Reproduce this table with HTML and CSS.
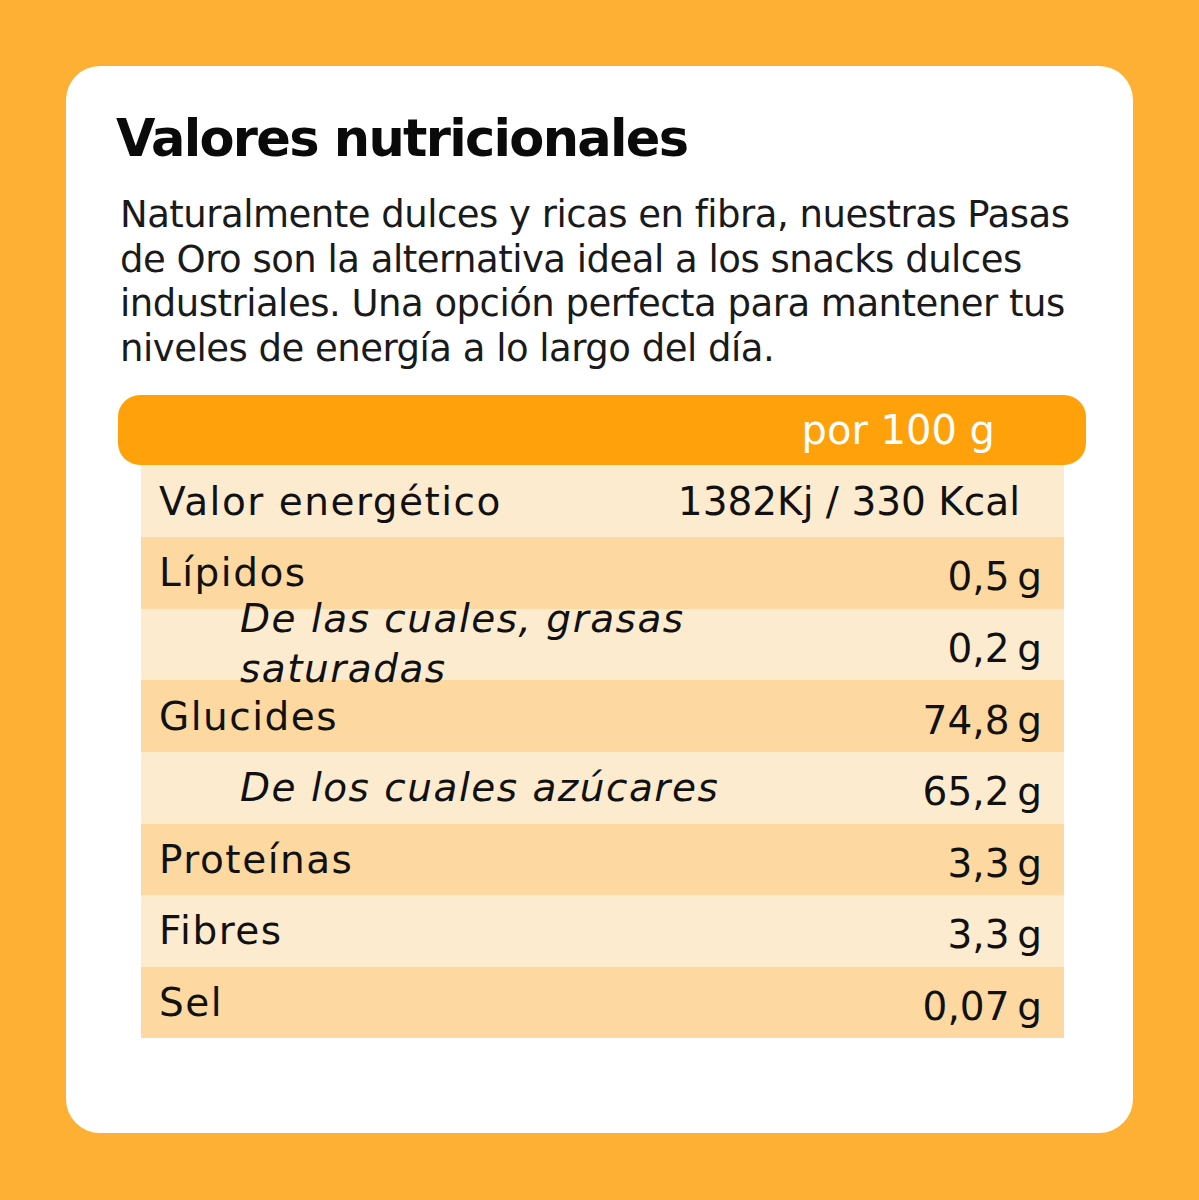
FILE: index.html
```html
<!DOCTYPE html>
<html lang="es">
<head>
<meta charset="utf-8">
<link rel="stylesheet" href="styles.css">
</head>
<body>
<main class="card">
  <h1 class="title">Valores nutricionales</h1>
  <p class="intro">Naturalmente dulces y ricas en fibra, nuestras Pasas<br>de Oro son la alternativa ideal a los snacks dulces<br>industriales. Una opción perfecta para mantener tus<br>niveles de energía a lo largo del día.</p>
  <div class="table">
    <div class="head"><span class="per">por 100 g</span></div>
    <div class="rows">
      <div class="row light"><span class="label">Valor energético</span><span class="value first">1382Kj / 330 Kcal</span></div>
      <div class="row dark"><span class="label">Lípidos</span><span class="value">0,5&#8201;g</span></div>
      <div class="row light"><span class="label sub wrap">De las cuales, grasas<br>saturadas</span><span class="value">0,2&#8201;g</span></div>
      <div class="row dark"><span class="label">Glucides</span><span class="value">74,8&#8201;g</span></div>
      <div class="row light"><span class="label sub">De los cuales azúcares</span><span class="value">65,2&#8201;g</span></div>
      <div class="row dark"><span class="label">Proteínas</span><span class="value">3,3&#8201;g</span></div>
      <div class="row light"><span class="label">Fibres</span><span class="value">3,3&#8201;g</span></div>
      <div class="row dark"><span class="label">Sel</span><span class="value">0,07&#8201;g</span></div>
    </div>
  </div>
</main>
</body>
</html>
```
FILE: styles.css
```css
html, body {
  margin: 0;
  padding: 0;
}
body {
  background: #FDB034;
  width: 1199px;
  height: 1200px;
  padding: 66px;
  box-sizing: border-box;
  font-family: "DejaVu Sans", "Liberation Sans", sans-serif;
  color: #111;
}
.card {
  background: #fff;
  width: 1067px;
  height: 1067px;
  border-radius: 34px;
  box-sizing: border-box;
  padding: 44px 0 0 50px;
}
.title {
  margin: 0;
  font-size: 51px;
  font-weight: bold;
  line-height: 58px;
  color: #0a0a0a;
  letter-spacing: -1.7px;
}
.intro {
  margin: 25px 0 0 4px;
  font-size: 37px;
  line-height: 44.6px;
  color: #1a1a1a;
  letter-spacing: -0.5px;
}
.table {
  margin-top: 24px;
  margin-left: 2px;
  width: 968px;
}
.head {
  height: 70px;
  background: #FEA10B;
  border-radius: 22px;
  display: flex;
  align-items: center;
  justify-content: flex-end;
  padding-right: 91px;
}
.per {
  color: #fff;
  font-size: 40px;
  font-weight: normal;
}
.rows {
  margin-left: 23px;
  width: 923px;
}
.row {
  height: 71.625px;
  display: flex;
  align-items: center;
  justify-content: space-between;
  padding: 0 22px 0 18px;
  box-sizing: border-box;
  font-size: 39px;
}
.light { background: #FDEBD0; }
.dark { background: #FDD9A1; }
.label {
  white-space: nowrap;
  letter-spacing: 1.5px;
}
.value {
  padding-top: 8px;
  white-space: nowrap;
}
.value.first {
  padding-top: 0;
  padding-right: 22px;
}
.sub {
  font-style: italic;
  padding-left: 81px;
}
.wrap {
  line-height: 50px;
}
```
